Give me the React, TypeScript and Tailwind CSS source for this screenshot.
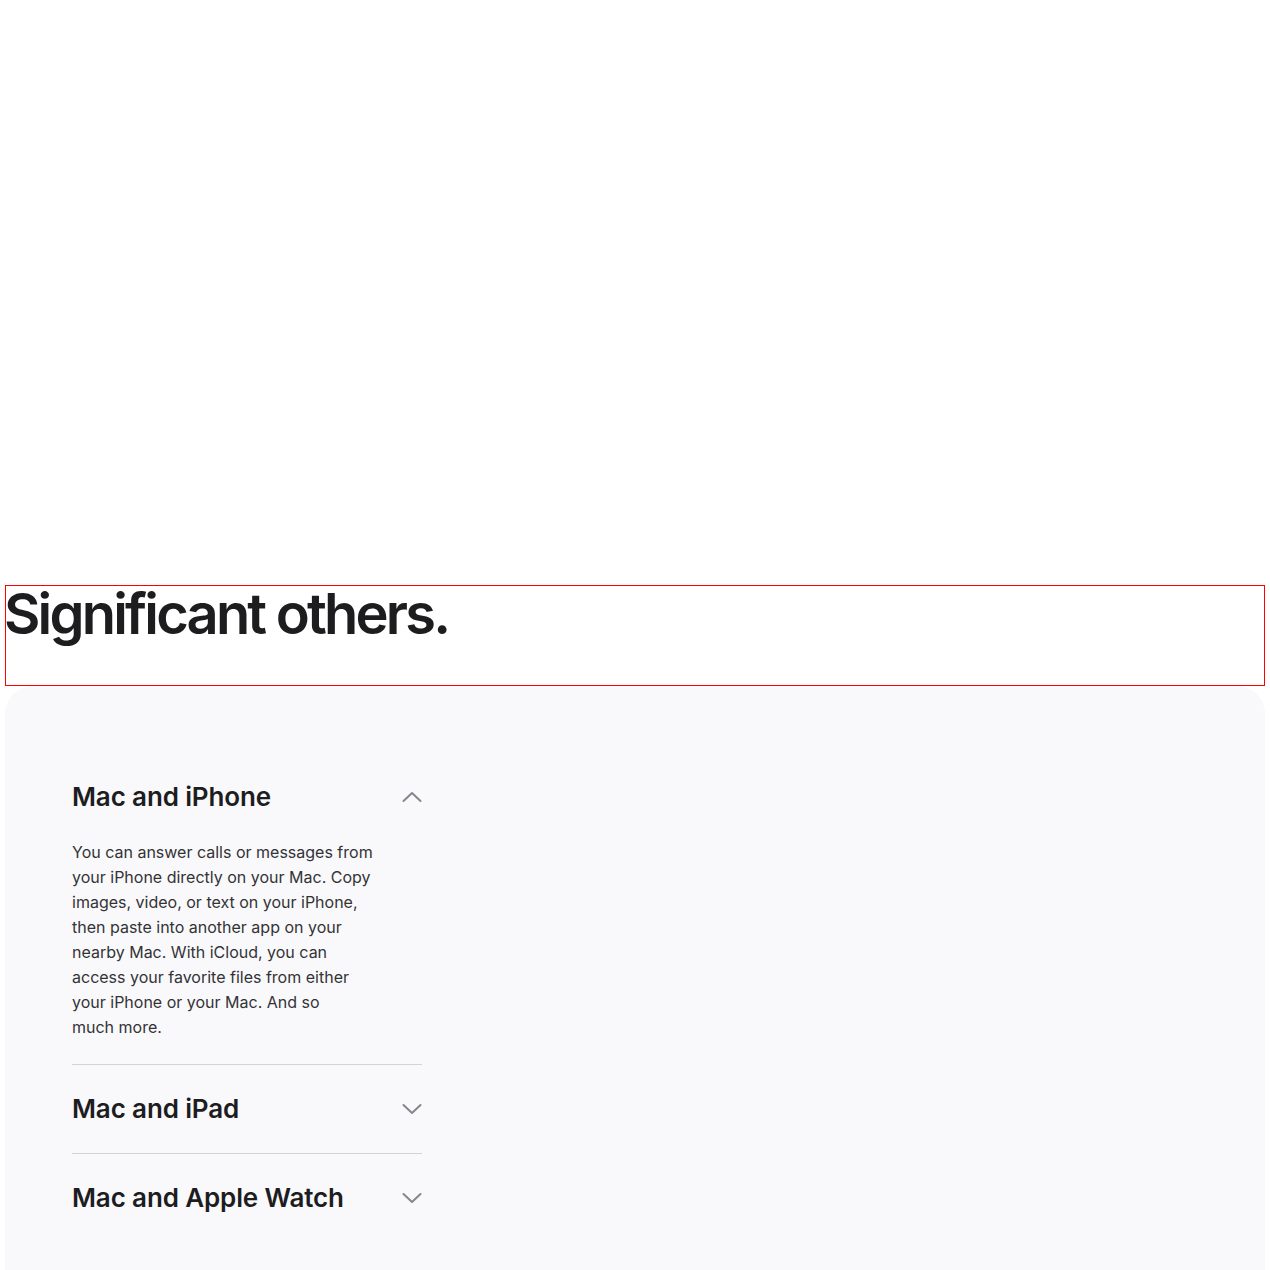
import { useState } from 'react'

const items = [
  {
    title: 'Mac and iPhone',
    body: 'You can answer calls or messages from your iPhone directly on your Mac. Copy images, video, or text on your iPhone, then paste into another app on your nearby Mac. With iCloud, you can access your favorite files from either your iPhone or your Mac. And so much\u00a0more.',
  },
  { title: 'Mac and iPad', body: '' },
  { title: 'Mac and Apple Watch', body: '' },
]

function Chevron({ up }: { up: boolean }) {
  return (
    <svg width="20" height="12" viewBox="0 0 20 12" fill="none" className="shrink-0">
      <path
        d={up ? 'M1.5 10 L10 2 L18.5 10' : 'M1.5 2 L10 10 L18.5 2'}
        stroke="#86868b"
        strokeWidth="2"
        strokeLinecap="round"
        strokeLinejoin="round"
      />
    </svg>
  )
}

export default function App() {
  const [open, setOpen] = useState(0)

  return (
    <div className="bg-white px-[5px] font-['Inter',sans-serif] text-[#1d1d1f]">
      <div className="h-[585px]" />
      <div className="h-[101px] border border-[#ff0000]">
        <h2 className="-ml-[2px] text-[56px] leading-[57px] font-semibold tracking-[-0.05em]">Significant others.</h2>
      </div>
      <div className="rounded-t-[28px] bg-[#f9f9fb] px-[67px] pt-[67px] pb-[40px]">
        <div className="w-[350px]">
          {items.map((item, i) => (
            <div key={item.title} className={i > 0 ? 'border-t border-[#d2d2d7]' : ''}>
              <button
                onClick={() => setOpen(open === i ? -1 : i)}
                className="flex w-full items-center justify-between pt-[28px] pb-[28px] text-left"
              >
                <span className="text-[26px] leading-[32px] font-semibold tracking-[-0.005em]">{item.title}</span>
                <Chevron up={open === i} />
              </button>
              {open === i && item.body && (
                <p className="-mt-[1px] pb-[24px] w-[310px] text-[16px] leading-[25px] text-[#333336]">{item.body}</p>
              )}
            </div>
          ))}
        </div>
      </div>
    </div>
  )
}
